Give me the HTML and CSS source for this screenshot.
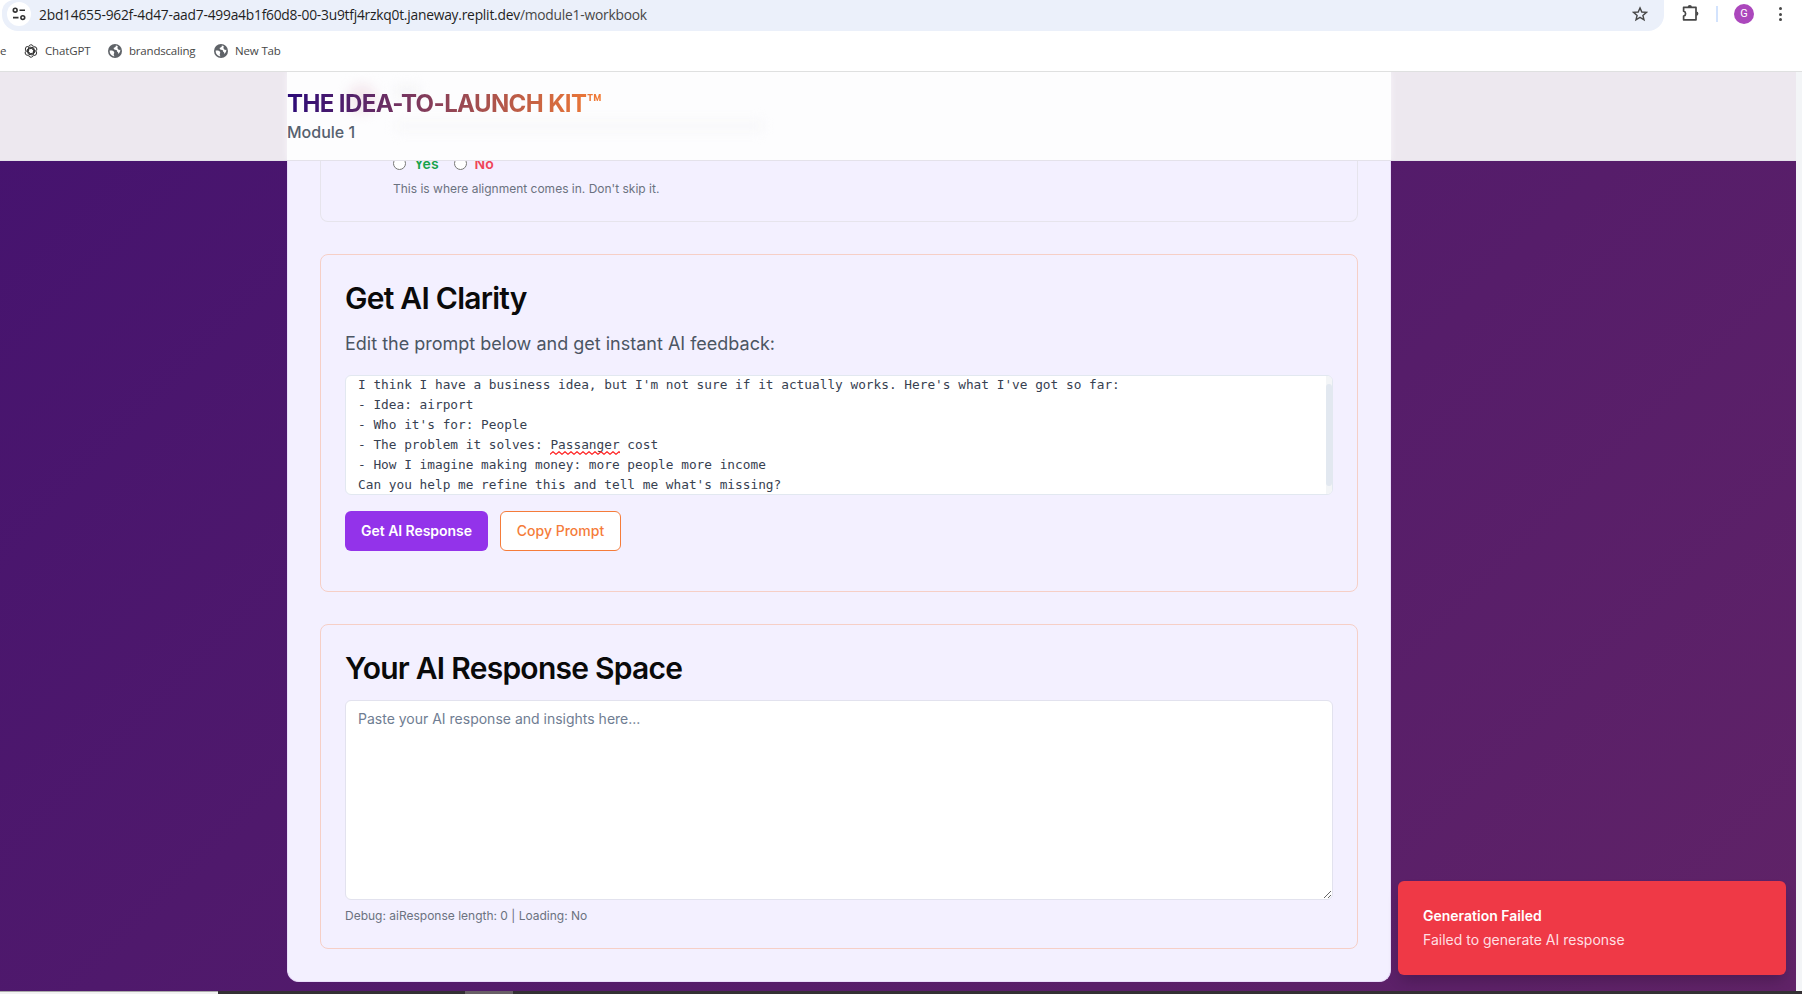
FILE: index.html
```html
<!DOCTYPE html>
<html lang="en">
<head>
<meta charset="utf-8">
<title>Module 1 Workbook</title>
<link rel="stylesheet" href="styles.css">
</head>
<body>
<div class="browser">
  <div class="toolbar">
    <div class="omnibox">
      <span class="site-info">
        <svg width="14" height="14" viewBox="0 0 14 14" fill="none" stroke="#333" stroke-width="1.6"><circle cx="3.2" cy="3.2" r="1.9"/><path d="M7.5 3.2H13M1 10.6h5.5"/><circle cx="10.8" cy="10.6" r="1.9"/></svg>
      </span>
      <span class="url">2bd14655-962f-4d47-aad7-499a4b1f60d8-00-3u9tfj4rzkq0t.janeway.replit.dev<span class="path">/module1-workbook</span></span>
      <svg class="star" width="16" height="16" viewBox="0 0 16 16" fill="none" stroke="#474747" stroke-width="1.4"><path d="M8 1.9l1.8 4.1 4.6.4-3.5 3 1.1 4.4L8 11.4l-4 2.4 1.1-4.4-3.5-3 4.6-.4z"/></svg>
    </div>
    <svg class="puzzle" width="18" height="18" viewBox="0 0 18 18"><path d="M2.6 3.4h12.400v12.400H2.6v-3.6c1.3-.3 2-1.300 2-2.500s-.7-2.200-2-2.500z" fill="none" stroke="#474747" stroke-width="1.7" stroke-linejoin="round"/><path d="M6.700 3a2.100 2.100 0 0 1 4.200 0zM15.300 7.600a2.100 2.100 0 0 1 0 4.200z" fill="#474747"/></svg>
    <span class="divider"></span>
    <span class="avatar">G</span>
    <span class="dots"><i></i><i></i><i></i></span>
  </div>
  <div class="bookmarks">
    <span class="bm bm-cut">e</span>
    <span class="bm bm-gpt"><svg width="14" height="14" viewBox="0 0 14 14" fill="none" stroke="#333" stroke-width="1"><path id="petal" d="M4.600 7V3.200a2.500 2.500 0 0 1 4.700-1.100M4.600 5.300l3.300-1.900 2.600 1.500"/><use href="#petal" transform="rotate(60 7 7)"/><use href="#petal" transform="rotate(120 7 7)"/><use href="#petal" transform="rotate(180 7 7)"/><use href="#petal" transform="rotate(240 7 7)"/><use href="#petal" transform="rotate(300 7 7)"/></svg><b>ChatGPT</b></span>
    <span class="bm bm-brand"><svg width="14" height="14" viewBox="0 0 14 14"><circle cx="7" cy="7" r="7" fill="#5f6368"/><path d="M7.800 1.500c.3 1.600-.8 2-2 2.200-.4 1 .2 1.900 1.300 2 1.600.1 2.200.8 2 2 1 .2 1.300 1 1.100 2.200 1.400-.9 2.300-2.600 2.100-4.100-1.200.3-2.400-.1-2.700-1.200C9.400 3.300 9.700 2.500 9.900 2.200 9.300 1.800 8.500 1.500 7.800 1.500zM1.700 6.500c1.800-.2 4.300-.1 4.500 1.800.1 1-.4 1.400-.5 2.300 0 .7.400 1.200.9 1.700C3.600 12.300 1.400 9.700 1.700 6.500z" fill="#fff"/></svg><b>brandscaling</b></span>
    <span class="bm bm-new"><svg width="14" height="14" viewBox="0 0 14 14"><circle cx="7" cy="7" r="7" fill="#5f6368"/><path d="M7.800 1.500c.3 1.600-.8 2-2 2.200-.4 1 .2 1.900 1.300 2 1.600.1 2.200.8 2 2 1 .2 1.300 1 1.100 2.200 1.400-.9 2.300-2.600 2.100-4.100-1.200.3-2.400-.1-2.700-1.200C9.400 3.300 9.700 2.500 9.900 2.200 9.300 1.800 8.500 1.500 7.800 1.500zM1.700 6.500c1.800-.2 4.300-.1 4.500 1.800.1 1-.4 1.400-.5 2.300 0 .7.400 1.200.9 1.700C3.600 12.300 1.400 9.700 1.700 6.500z" fill="#fff"/></svg><b>New Tab</b></span>
  </div>
</div>

<div class="viewport">
  <div class="page">
    <header class="header">
      <div class="header-inner">
        <span class="ghost ghost-circle"></span>
        <span class="ghost ghost-title"></span>
        <span class="ghost ghost-line"></span>
        <h1>THE IDEA-TO-LAUNCH KIT™</h1>
        <p>Module 1</p>
      </div>
    </header>
    <main class="panel">
      <section class="card card-prev">
        <div class="choices">
          <label class="yes"><input type="radio" name="c">Yes</label>
          <label class="no"><input type="radio" name="c">No</label>
        </div>
        <p class="hint">This is where alignment comes in. Don't skip it.</p>
      </section>
      <section class="card card-prompt">
        <h2>Get AI Clarity</h2>
        <p class="lead">Edit the prompt below and get instant AI feedback:</p>
        <div class="prompt">
          <div class="prompt-text">I think I have a business idea, but I'm not sure if it actually works. Here's what I've got so far:
- Idea: airport
- Who it's for: People
- The problem it solves: <span class="typo">Passanger<svg width="70" height="4"><defs><pattern id="wave" width="6" height="4" patternUnits="userSpaceOnUse"><path d="M-1.500 2L0 3.300 3 .7 6 3.300 7.500 2" fill="none" stroke="#f22" stroke-width="1.200"/></pattern></defs><rect width="70" height="4" fill="url(#wave)"/></svg></span> cost
- How I imagine making money: more people more income
Can you help me refine this and tell me what's missing?</div>
          <div class="track"><div class="thumb"></div></div>
        </div>
        <div class="actions">
          <button class="btn primary">Get AI Response</button>
          <button class="btn outline">Copy Prompt</button>
        </div>
      </section>
      <section class="card card-response">
        <h2>Your AI Response Space</h2>
        <textarea class="response" placeholder="Paste your AI response and insights here..."></textarea>
        <p class="debug">Debug: aiResponse length: 0 | Loading: No</p>
      </section>
    </main>
  </div>
  <div class="scrollbar"></div>
  <div class="toast">
    <strong>Generation Failed</strong>
    <span>Failed to generate AI response</span>
  </div>
</div>
<div class="taskbar"><span class="task-search"></span><span class="task-active"></span></div>
</body>
</html>
```
FILE: styles.css
```css
* { box-sizing: border-box; }
body { margin: 0; width: 1802px; height: 994px; overflow: hidden; display: flex; flex-direction: column; font-family: Inter, sans-serif; background: #fff; }
h1, h2, p { margin: 0; }

.browser { height: 72px; flex: none; border-bottom: 1px solid #dfe0e0; font-family: "Open Sans", "Noto Sans", sans-serif; background: #fff; }
.toolbar { height: 31px; display: flex; align-items: flex-start; }
.omnibox { width: 1662px; height: 31px; margin-left: 2px; background: #ebf0fa; border-radius: 0 0 16px 16px; border-top-left-radius: 12px; display: flex; align-items: center; padding: 0 16px 3px 5px; }
.site-info { width: 24px; height: 24px; border-radius: 50%; background: #fff; display: flex; align-items: center; justify-content: center; }
.url { margin-left: 8px; flex: 1; font-size: 13.800px; letter-spacing: -0.225px; color: #1f1f1f; white-space: nowrap; }
.path { color: #474747; }
.puzzle { margin: 4px 0 0 17px; }
.divider { width: 2px; height: 16px; margin: 6px 0 0 17px; background: #d3e3fd; }
.avatar { width: 20px; height: 20px; margin: 4px 0 0 16px; border-radius: 50%; background: #ab47bc; color: #fff; font: 11px/20px Roboto, sans-serif; text-align: center; }
.dots { display: flex; flex-direction: column; gap: 2.500px; margin: 7px 0 0 25px; }
.dots i { width: 3px; height: 3px; border-radius: 50%; background: #474747; }
.bookmarks { height: 40px; display: flex; align-items: center; font-size: 11.500px; color: #474747; }
.bm { display: flex; align-items: center; gap: 7px; white-space: nowrap; }
.bm b { font-weight: 400; margin-top: -2px; }
.bm-cut { width: 24px; margin-top: -2px; }
.bm-gpt { width: 84px; letter-spacing: -0.150px; }
.bm-brand { width: 106px; letter-spacing: -0.200px; }
.bm-new { letter-spacing: -0.150px; }

.viewport { flex: none; height: 919px; position: relative; display: flex; overflow: hidden; }
.page { flex: 1; background: linear-gradient(135deg, #45136f, #602367); display: flex; flex-direction: column; }
.scrollbar { width: 6px; background: #f3f5f7; }
.header { height: 89px; flex: none; background: #ede8ef; border-bottom: 1px solid #e4e2ea; }
.header-inner { width: 1104px; height: 88px; margin: 0 auto 0 287px; padding-top: 16px; background: #fdfdfe; box-shadow: 0 0 6px #f7f5fa; clip-path: inset(0 -10px 0 -10px); position: relative; }
.header h1 { position: relative; width: max-content; font-size: 24px; line-height: 32px; font-weight: 700; letter-spacing: -0.600px; background: linear-gradient(90deg, #2b0a78, #f27b35); -webkit-background-clip: text; background-clip: text; color: transparent; }
.header p { position: relative; font-size: 16px; line-height: 24px; font-weight: 500; color: #56616f; }
.ghost { position: absolute; filter: blur(6px); }
.ghost-circle { left: 60px; top: 12px; width: 30px; height: 30px; border-radius: 50%; background: #f4e8ee; }
.ghost-title { left: 108px; top: 14px; width: 24px; height: 12px; background: #f4f4f6; }
.ghost-line { left: 108px; top: 49px; width: 368px; height: 10px; background: #f7f7f9; }

.panel { width: 1104px; height: 821px; flex: none; margin-left: 287px; background: #f3f0ff; border: 1px solid #e9ddfb; border-top: 0; border-radius: 0 0 12px 12px; padding: 0 32px; display: flex; flex-direction: column; gap: 32px; }
.card { border: 1px solid #f6cfc6; border-radius: 8px; padding: 24px; flex: none; }
.card-prev { height: 61px; border: 1px solid #e6e4ec; border-top: 0; border-radius: 0 0 8px 8px; padding: 0 72px; overflow: hidden; }
.choices { display: flex; gap: 15px; margin-top: -10px; height: 24px; align-items: center; font-size: 14px; font-weight: 600; }
.choices label { display: flex; align-items: center; gap: 8px; }
.choices input { width: 13px; height: 13px; margin: 0; }
.yes { color: #16a34a; }
.no { color: #ef4458; }
.hint, .debug { font-size: 12px; line-height: 16px; color: #6b7280; }
.hint { margin-top: 6px; }
.card-prompt { height: 338px; }
.card-response { height: 325px; }
h2 { font-size: 30px; line-height: 36px; font-weight: 600; letter-spacing: -0.750px; color: #0a0a0a; }
.card h2 { margin-top: 1px; }
.lead { margin-top: 14px; font-size: 18px; line-height: 28px; color: #4b5563; }
.prompt { margin-top: 17px; height: 120px; background: #fff; border: 1px solid #e2e8f0; border-radius: 6px; overflow: hidden; display: flex; justify-content: space-between; }
.prompt-text { white-space: pre; font: 12.790px/20px "DejaVu Sans Mono", monospace; color: #374151; padding-left: 12px; margin-top: -1px; }
.typo { position: relative; }
.typo svg { position: absolute; left: 0; bottom: -3px; }
.track { width: 6px; background: #f3f5f7; padding-top: 8px; }
.thumb { height: 102px; border-radius: 3px; background: #e2e8f0; }
.actions { display: flex; gap: 12px; margin-top: 16px; }
.btn { height: 40px; border-radius: 6px; border: 0; padding: 0; font: 600 14px/20px Inter, sans-serif; letter-spacing: -0.050px; }
.primary { width: 143px; background: #9333ea; color: #fff; }
.outline { width: 121px; background: #fff; border: 1px solid #f57c3a; color: #f57c3a; font-weight: 500; letter-spacing: 0; }
.response { display: block; margin-top: 14px; width: 100%; height: 200px; border: 1px solid #e2e2ee; border-radius: 6px; padding: 8px 12px; font: 14px/20px Inter, sans-serif; background: #fff; resize: vertical; }
.response::placeholder { color: #6f7d92; }
.debug { margin-top: 8px; }

.toast { position: absolute; left: 1398px; top: 809px; width: 388px; height: 94px; border-radius: 6px; background: #ef3946; box-shadow: 0 8px 14px -3px rgba(0,0,0,.2); padding: 25px; display: flex; flex-direction: column; gap: 4px; font-size: 14px; line-height: 20px; color: #fff; }
.toast strong { font-weight: 600; }
.toast span { color: #ffdfe1; }
.taskbar { height: 3px; flex: none; background: #343034; display: flex; }
.task-search { width: 218px; background: #f2f2f2; border-top: 1px solid #aaa; }
.task-active { margin-left: 247px; width: 48px; background: #686066; }
```
